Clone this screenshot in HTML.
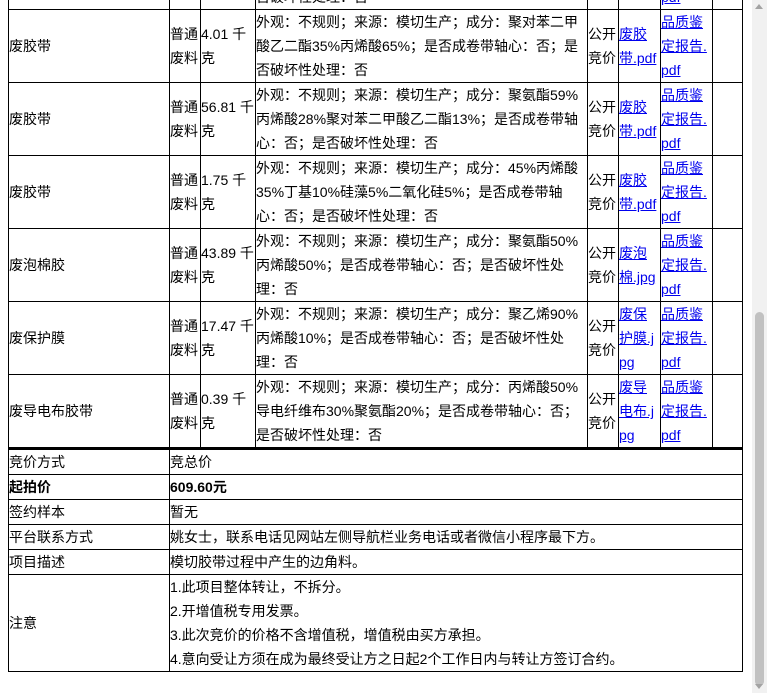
<!DOCTYPE html>
<html><head><meta charset="utf-8"><style>
body{margin:0;width:767px;height:693px;overflow:hidden;background:#fff;position:relative;font-family:"Liberation Sans","Noto Sans CJK SC",sans-serif;font-size:14px;color:#000}
table{border-collapse:collapse;table-layout:fixed;position:absolute;left:8px}
td{border:1px solid #000;padding:0;line-height:24px;vertical-align:middle;overflow:hidden;white-space:nowrap}
a{color:#00e;text-decoration:underline}
#t1 td{height:72px}
#t2{top:448px;width:735px;border:1px solid #000;border-top:2px solid #000}
#t2 td{height:24px}
.sb{position:absolute;right:0;top:0;width:15px;height:693px;background:#f1f1f1}
.th{position:absolute;left:3px;width:9px;top:312px;height:374px;background:#c1c1c1;border-radius:5px}
</style></head><body>
<table id="t1" style="top:-64px;width:735px">
<colgroup><col style="width:161px"><col style="width:31px"><col style="width:55px"><col style="width:332px"><col style="width:31px"><col style="width:42px"><col style="width:52px"><col style="width:30px"></colgroup>
<tr><td></td><td></td><td></td><td><br><br>否破坏性处理：否</td><td></td><td></td><td><br><br><a>pdf</a></td><td></td></tr>
<tr><td>废胶带</td><td>普通<br>废料</td><td>4.01 千<br>克</td><td>外观：不规则；来源：模切生产；成分：聚对苯二甲<br>酸乙二酯35%丙烯酸65%；是否成卷带轴心：否；是<br>否破坏性处理：否</td><td>公开<br>竞价</td><td><a>废胶<br>带.pdf</a></td><td><a>品质鉴<br>定报告.<br>pdf</a></td><td></td></tr>
<tr><td>废胶带</td><td>普通<br>废料</td><td>56.81 千<br>克</td><td>外观：不规则；来源：模切生产；成分：聚氨酯59%<br>丙烯酸28%聚对苯二甲酸乙二酯13%；是否成卷带轴<br>心：否；是否破坏性处理：否</td><td>公开<br>竞价</td><td><a>废胶<br>带.pdf</a></td><td><a>品质鉴<br>定报告.<br>pdf</a></td><td></td></tr>
<tr><td>废胶带</td><td>普通<br>废料</td><td>1.75 千<br>克</td><td>外观：不规则；来源：模切生产；成分：45%丙烯酸<br>35%丁基10%硅藻5%二氧化硅5%；是否成卷带轴<br>心：否；是否破坏性处理：否</td><td>公开<br>竞价</td><td><a>废胶<br>带.pdf</a></td><td><a>品质鉴<br>定报告.<br>pdf</a></td><td></td></tr>
<tr><td>废泡棉胶</td><td>普通<br>废料</td><td>43.89 千<br>克</td><td>外观：不规则；来源：模切生产；成分：聚氨酯50%<br>丙烯酸50%；是否成卷带轴心：否；是否破坏性处<br>理：否</td><td>公开<br>竞价</td><td><a>废泡<br>棉.jpg</a></td><td><a>品质鉴<br>定报告.<br>pdf</a></td><td></td></tr>
<tr><td>废保护膜</td><td>普通<br>废料</td><td>17.47 千<br>克</td><td>外观：不规则；来源：模切生产；成分：聚乙烯90%<br>丙烯酸10%；是否成卷带轴心：否；是否破坏性处<br>理：否</td><td>公开<br>竞价</td><td><a>废保<br>护膜.j<br>pg</a></td><td><a>品质鉴<br>定报告.<br>pdf</a></td><td></td></tr>
<tr><td>废导电布胶带</td><td>普通<br>废料</td><td>0.39 千<br>克</td><td>外观：不规则；来源：模切生产；成分：丙烯酸50%<br>导电纤维布30%聚氨酯20%；是否成卷带轴心：否；<br>是否破坏性处理：否</td><td>公开<br>竞价</td><td><a>废导<br>电布.j<br>pg</a></td><td><a>品质鉴<br>定报告.<br>pdf</a></td><td></td></tr>
</table>
<table id="t2">
<colgroup><col style="width:161px"><col></colgroup>
<tr><td>竞价方式</td><td>竞总价</td></tr>
<tr><td><b>起拍价</b></td><td><b>609.60元</b></td></tr>
<tr><td>签约样本</td><td>暂无</td></tr>
<tr><td>平台联系方式</td><td>姚女士，联系电话见网站左侧导航栏业务电话或者微信小程序最下方。</td></tr>
<tr><td>项目描述</td><td>模切胶带过程中产生的边角料。</td></tr>
<tr><td style="height:96px">注意</td><td>1.此项目整体转让，不拆分。<br>2.开增值税专用发票。<br>3.此次竞价的价格不含增值税，增值税由买方承担。<br>4.意向受让方须在成为最终受让方之日起2个工作日内与转让方签订合约。</td></tr>
</table>
<div class="sb"><div style="position:absolute;left:3px;top:4px;border-left:4.5px solid transparent;border-right:4.5px solid transparent;border-bottom:5px solid #a3a3a3"></div><div class="th"></div><div style="position:absolute;left:3px;top:684px;border-left:4.5px solid transparent;border-right:4.5px solid transparent;border-top:5px solid #a3a3a3"></div></div>
</body></html>
